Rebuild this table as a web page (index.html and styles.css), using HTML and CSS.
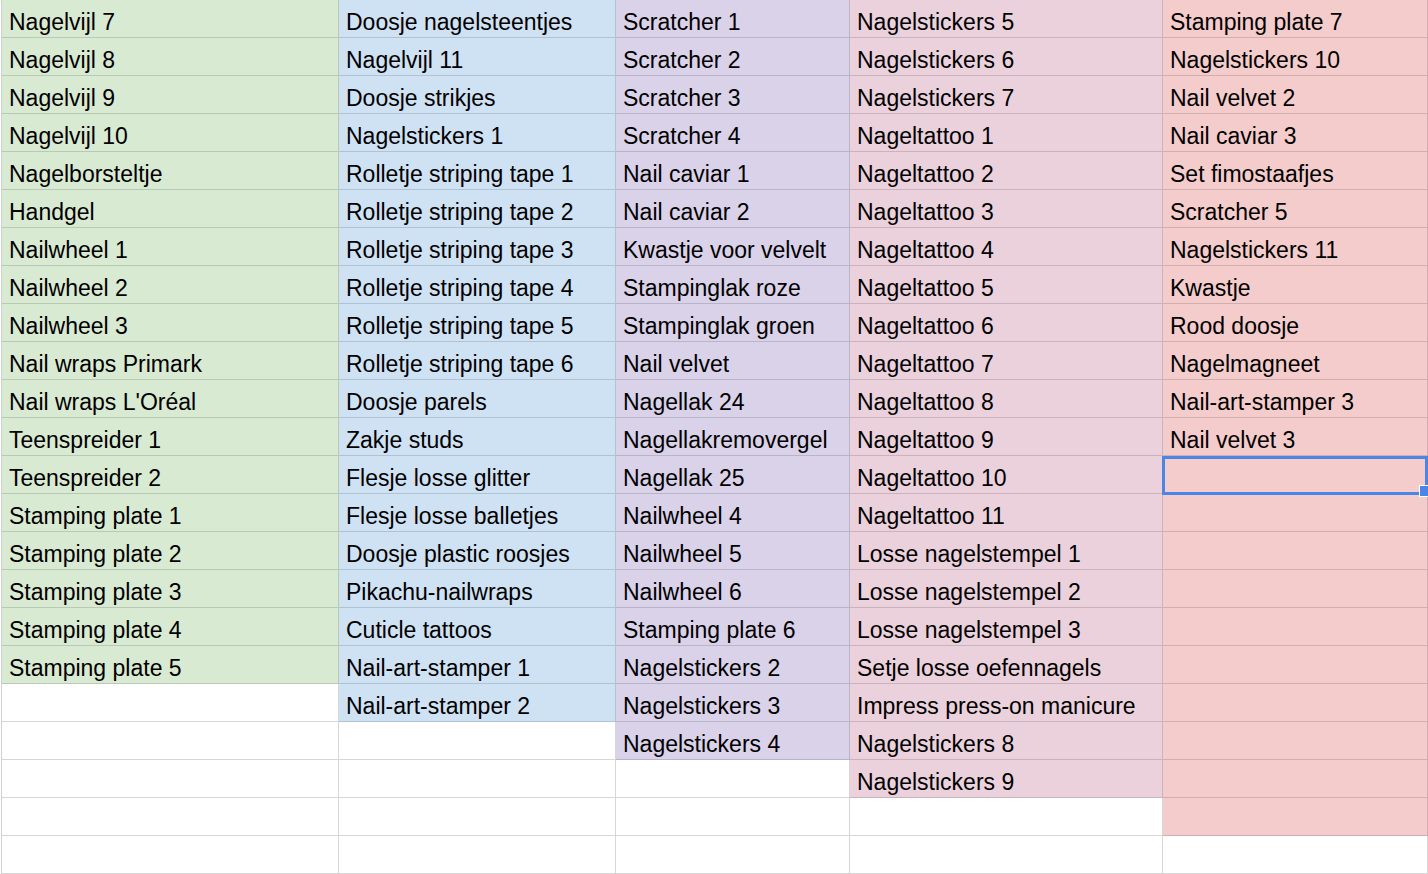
FILE: index.html
```html
<!DOCTYPE html>
<html lang="nl">
<head>
<meta charset="utf-8">
<title>Nagel spullen</title>
<link rel="stylesheet" href="styles.css">
</head>
<body>
<div class="sheet">
  <div class="c g">Nagelvijl 7</div>
  <div class="c g">Nagelvijl 8</div>
  <div class="c g">Nagelvijl 9</div>
  <div class="c g">Nagelvijl 10</div>
  <div class="c g">Nagelborsteltje</div>
  <div class="c g">Handgel</div>
  <div class="c g">Nailwheel 1</div>
  <div class="c g">Nailwheel 2</div>
  <div class="c g">Nailwheel 3</div>
  <div class="c g">Nail wraps Primark</div>
  <div class="c g">Nail wraps L'Oréal</div>
  <div class="c g">Teenspreider 1</div>
  <div class="c g">Teenspreider 2</div>
  <div class="c g">Stamping plate 1</div>
  <div class="c g">Stamping plate 2</div>
  <div class="c g">Stamping plate 3</div>
  <div class="c g">Stamping plate 4</div>
  <div class="c g">Stamping plate 5</div>
  <div class="c"></div>
  <div class="c"></div>
  <div class="c"></div>
  <div class="c"></div>
  <div class="c"></div>

  <div class="c b">Doosje nagelsteentjes</div>
  <div class="c b">Nagelvijl 11</div>
  <div class="c b">Doosje strikjes</div>
  <div class="c b">Nagelstickers 1</div>
  <div class="c b">Rolletje striping tape 1</div>
  <div class="c b">Rolletje striping tape 2</div>
  <div class="c b">Rolletje striping tape 3</div>
  <div class="c b">Rolletje striping tape 4</div>
  <div class="c b">Rolletje striping tape 5</div>
  <div class="c b">Rolletje striping tape 6</div>
  <div class="c b">Doosje parels</div>
  <div class="c b">Zakje studs</div>
  <div class="c b">Flesje losse glitter</div>
  <div class="c b">Flesje losse balletjes</div>
  <div class="c b">Doosje plastic roosjes</div>
  <div class="c b">Pikachu-nailwraps</div>
  <div class="c b">Cuticle tattoos</div>
  <div class="c b">Nail-art-stamper 1</div>
  <div class="c b">Nail-art-stamper 2</div>
  <div class="c"></div>
  <div class="c"></div>
  <div class="c"></div>
  <div class="c"></div>

  <div class="c p">Scratcher 1</div>
  <div class="c p">Scratcher 2</div>
  <div class="c p">Scratcher 3</div>
  <div class="c p">Scratcher 4</div>
  <div class="c p">Nail caviar 1</div>
  <div class="c p">Nail caviar 2</div>
  <div class="c p">Kwastje voor velvelt</div>
  <div class="c p">Stampinglak roze</div>
  <div class="c p">Stampinglak groen</div>
  <div class="c p">Nail velvet</div>
  <div class="c p">Nagellak 24</div>
  <div class="c p">Nagellakremovergel</div>
  <div class="c p">Nagellak 25</div>
  <div class="c p">Nailwheel 4</div>
  <div class="c p">Nailwheel 5</div>
  <div class="c p">Nailwheel 6</div>
  <div class="c p">Stamping plate 6</div>
  <div class="c p">Nagelstickers 2</div>
  <div class="c p">Nagelstickers 3</div>
  <div class="c p">Nagelstickers 4</div>
  <div class="c"></div>
  <div class="c"></div>
  <div class="c"></div>

  <div class="c r">Nagelstickers 5</div>
  <div class="c r">Nagelstickers 6</div>
  <div class="c r">Nagelstickers 7</div>
  <div class="c r">Nageltattoo 1</div>
  <div class="c r">Nageltattoo 2</div>
  <div class="c r">Nageltattoo 3</div>
  <div class="c r">Nageltattoo 4</div>
  <div class="c r">Nageltattoo 5</div>
  <div class="c r">Nageltattoo 6</div>
  <div class="c r">Nageltattoo 7</div>
  <div class="c r">Nageltattoo 8</div>
  <div class="c r">Nageltattoo 9</div>
  <div class="c r">Nageltattoo 10</div>
  <div class="c r">Nageltattoo 11</div>
  <div class="c r">Losse nagelstempel 1</div>
  <div class="c r">Losse nagelstempel 2</div>
  <div class="c r">Losse nagelstempel 3</div>
  <div class="c r">Setje losse oefennagels</div>
  <div class="c r">Impress press-on manicure</div>
  <div class="c r">Nagelstickers 8</div>
  <div class="c r">Nagelstickers 9</div>
  <div class="c"></div>
  <div class="c"></div>

  <div class="c s">Stamping plate 7</div>
  <div class="c s">Nagelstickers 10</div>
  <div class="c s">Nail velvet 2</div>
  <div class="c s">Nail caviar 3</div>
  <div class="c s">Set fimostaafjes</div>
  <div class="c s">Scratcher 5</div>
  <div class="c s">Nagelstickers 11</div>
  <div class="c s">Kwastje</div>
  <div class="c s">Rood doosje</div>
  <div class="c s">Nagelmagneet</div>
  <div class="c s">Nail-art-stamper 3</div>
  <div class="c s">Nail velvet 3</div>
  <div class="c s sel"></div>
  <div class="c s"></div>
  <div class="c s"></div>
  <div class="c s"></div>
  <div class="c s"></div>
  <div class="c s"></div>
  <div class="c s"></div>
  <div class="c s"></div>
  <div class="c s"></div>
  <div class="c s"></div>
  <div class="c"></div>
</div>
</body>
</html>
```

FILE: styles.css
```css
html, body {
  margin: 0;
  padding: 0;
  background: #ffffff;
  overflow: hidden;
}

.sheet {
  margin-left: 1px;
  border-left: 1px solid #d0d0d0;
  display: grid;
  grid-template-columns: 337px 277px 234px 313px 265px;
  grid-template-rows: repeat(23, 38px);
  grid-auto-flow: column;
  font-family: "Liberation Sans", Arial, sans-serif;
  font-size: 23px;
  color: #000;
}

.c {
  box-sizing: border-box;
  border-right: 1px solid #d6d6d6;
  border-bottom: 1px solid #d6d6d6;
  padding: 0 6px 2px 7px;
  display: flex;
  align-items: flex-end;
  line-height: 26px;
  white-space: nowrap;
  overflow: hidden;
  position: relative;
}

.g, .b, .p, .r, .s {
  border-color: rgba(0, 0, 0, 0.14);
  background-clip: border-box;
}

.g { background-color: #d9ead3; }
.b { background-color: #cfe2f3; }
.p { background-color: #d9d2e9; }
.r { background-color: #ead1dc; }
.s { background-color: #f4cccc; }

.sel {
  overflow: visible;
  z-index: 2;
}

.sel::before {
  content: "";
  position: absolute;
  left: -1px;
  top: 0;
  right: -1px;
  bottom: -2px;
  border: 3px solid #4a86e8;
}

.sel::after {
  content: "";
  position: absolute;
  right: -4px;
  bottom: -4px;
  width: 10px;
  height: 10px;
  background: #4a86e8;
  border: 1px solid #ffffff;
}
```
